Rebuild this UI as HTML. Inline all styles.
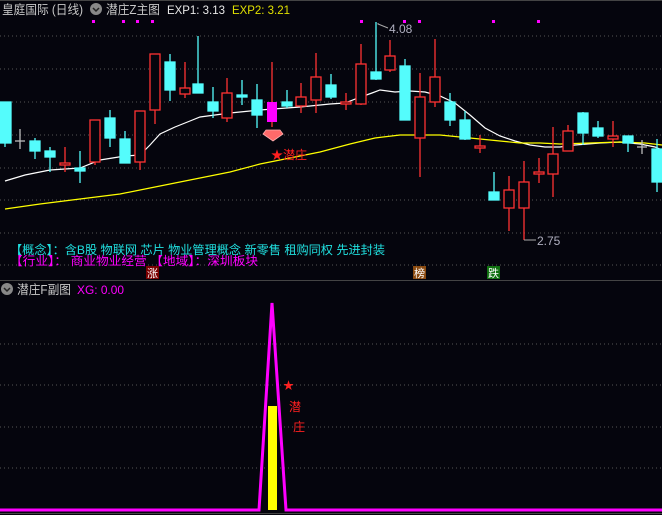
<!DOCTYPE html>
<html><head><meta charset="utf-8"><style>
body{margin:0;background:#05050d;width:662px;height:515px;overflow:hidden;font-family:"Liberation Sans","Noto Sans CJK SC",sans-serif}
svg{position:absolute;left:0;top:0}
</style></head><body>
<svg width="662" height="515" xmlns="http://www.w3.org/2000/svg" font-family="Liberation Sans, Noto Sans CJK SC, sans-serif">
<rect width="662" height="515" fill="#05050d"/>
<line x1="0" y1="0.5" x2="662" y2="0.5" stroke="#444"/>
<g stroke="#555" stroke-dasharray="1,3">
<line x1="0" y1="36" x2="662" y2="36"/><line x1="0" y1="69" x2="662" y2="69"/><line x1="0" y1="102" x2="662" y2="102"/><line x1="0" y1="135" x2="662" y2="135"/><line x1="0" y1="168" x2="662" y2="168"/><line x1="0" y1="200" x2="662" y2="200"/><line x1="0" y1="233" x2="662" y2="233"/><line x1="0" y1="265" x2="662" y2="265"/>
<line x1="0" y1="344" x2="662" y2="344"/><line x1="0" y1="385" x2="662" y2="385"/><line x1="0" y1="427" x2="662" y2="427"/><line x1="0" y1="468" x2="662" y2="468"/>
</g>
<line x1="0" y1="280.5" x2="662" y2="280.5" stroke="#444"/>
<line x1="0" y1="513.5" x2="662" y2="513.5" stroke="#444"/>
<text x="2" y="14" font-size="12.5" fill="#c8c8c8" textLength="81" lengthAdjust="spacingAndGlyphs">皇庭国际 (日线)</text>
<circle cx="96" cy="9" r="6" fill="#888"/><path d="M93 8l3 3 3-3" stroke="#222" fill="none" stroke-width="1.5"/>
<text x="106" y="14" font-size="12.5" fill="#c8c8c8" textLength="54" lengthAdjust="spacingAndGlyphs">潜庄Z主图</text>
<text x="167" y="14" font-size="12" fill="#e8e8e8" textLength="58" lengthAdjust="spacingAndGlyphs">EXP1: 3.13</text>
<text x="232" y="14" font-size="12" fill="#e0e000" textLength="58" lengthAdjust="spacingAndGlyphs">EXP2: 3.21</text>
<g fill="#ff00ff"><rect x="92" y="20" width="3" height="3"/><rect x="122" y="20" width="3" height="3"/><rect x="136" y="20" width="3" height="3"/><rect x="151" y="20" width="3" height="3"/><rect x="360" y="20" width="3" height="3"/><rect x="403" y="20" width="3" height="3"/><rect x="418" y="20" width="3" height="3"/><rect x="492" y="20" width="3" height="3"/><rect x="537" y="20" width="3" height="3"/></g>
<polyline fill="none" stroke="#fff" stroke-width="1.2" points="5,181 25,175 50,170 80,168 100,160 125,156 140,155 150,145 160,134 175,127 190,121 200,117 230,113 260,110 300,107 330,104 345,103 358,98 372,93 380,90 395,92 410,91 425,92 440,96 455,103 470,115 485,128 500,136 515,141 530,145 545,147 560,147 575,145 600,143 620,142 640,144 655,147 662,150"/>
<polyline fill="none" stroke="#ffff00" stroke-width="1.2" points="5,209 40,204 80,199 120,194 150,188 190,180 230,172 260,164 290,158 320,152 350,144 375,138 400,135 440,135 470,138 500,141 520,143 540,143 560,144 590,143 620,142 645,143 662,145"/>
<g stroke-width="1.3">
<g stroke="#54fcfc" fill="#54fcfc">
<line x1="5" y1="102" x2="5" y2="147"/><rect x="0" y="102" width="11" height="41"/>
<line x1="35" y1="138" x2="35" y2="159"/><rect x="30" y="141" width="10" height="10"/>
<line x1="50" y1="147" x2="50" y2="172"/><rect x="45" y="151" width="10" height="6"/>
<line x1="80" y1="151" x2="80" y2="183"/><rect x="75" y="168" width="10" height="3"/>
<line x1="110" y1="110" x2="110" y2="147"/><rect x="105" y="118" width="10" height="20"/>
<line x1="125" y1="131" x2="125" y2="163"/><rect x="120" y="139" width="10" height="24"/>
<line x1="170" y1="54" x2="170" y2="101"/><rect x="165" y="62" width="10" height="28"/>
<line x1="198" y1="36" x2="198" y2="93"/><rect x="193" y="84" width="10" height="9"/>
<line x1="213" y1="87" x2="213" y2="118"/><rect x="208" y="102" width="10" height="9"/>
<line x1="242" y1="80" x2="242" y2="105"/><rect x="237" y="95" width="10" height="2"/>
<line x1="257" y1="84" x2="257" y2="128"/><rect x="252" y="100" width="10" height="15"/>
<line x1="287" y1="90" x2="287" y2="108"/><rect x="282" y="102" width="10" height="4"/>
<line x1="331" y1="74" x2="331" y2="99"/><rect x="326" y="85" width="10" height="12"/>
<line x1="376" y1="22" x2="376" y2="80"/><rect x="371" y="72" width="10" height="7"/>
<line x1="405" y1="59" x2="405" y2="120"/><rect x="400" y="66" width="10" height="54"/>
<line x1="450" y1="93" x2="450" y2="126"/><rect x="445" y="102" width="10" height="18"/>
<line x1="465" y1="111" x2="465" y2="140"/><rect x="460" y="120" width="10" height="19"/>
<line x1="494" y1="172" x2="494" y2="200"/><rect x="489" y="192" width="10" height="8"/>
<line x1="583" y1="112" x2="583" y2="145"/><rect x="578" y="113" width="10" height="20"/>
<line x1="598" y1="121" x2="598" y2="138"/><rect x="593" y="128" width="10" height="8"/>
<line x1="628" y1="136" x2="628" y2="152"/><rect x="623" y="136" width="10" height="7"/>
<line x1="657" y1="139" x2="657" y2="192"/><rect x="652" y="149" width="10" height="33"/>
</g>
<g stroke="#ff3232" fill="#05050d">
<line x1="65" y1="147" x2="65" y2="172"/><rect x="60" y="163" width="10" height="2"/>
<line x1="95" y1="120" x2="95" y2="165"/><rect x="90" y="120" width="10" height="42"/>
<line x1="140" y1="111" x2="140" y2="170"/><rect x="135" y="111" width="10" height="51"/>
<line x1="155" y1="54" x2="155" y2="124"/><rect x="150" y="54" width="10" height="56"/>
<line x1="185" y1="62" x2="185" y2="98"/><rect x="180" y="88" width="10" height="6"/>
<line x1="227" y1="78" x2="227" y2="122"/><rect x="222" y="93" width="10" height="25"/>
<line x1="301" y1="83" x2="301" y2="113"/><rect x="296" y="97" width="10" height="9"/>
<line x1="316" y1="53" x2="316" y2="113"/><rect x="311" y="77" width="10" height="23"/>
<line x1="346" y1="93" x2="346" y2="110"/><rect x="341" y="102" width="10" height="2"/>
<line x1="361" y1="44" x2="361" y2="105"/><rect x="356" y="64" width="10" height="40"/>
<line x1="390" y1="40" x2="390" y2="72"/><rect x="385" y="56" width="10" height="14"/>
<line x1="420" y1="73" x2="420" y2="177"/><rect x="415" y="97" width="10" height="41"/>
<line x1="435" y1="39" x2="435" y2="107"/><rect x="430" y="77" width="10" height="25"/>
<line x1="480" y1="135" x2="480" y2="153"/><rect x="475" y="146" width="10" height="2"/>
<line x1="509" y1="176" x2="509" y2="231"/><rect x="504" y="190" width="10" height="18"/>
<line x1="524" y1="161" x2="524" y2="240"/><rect x="519" y="182" width="10" height="26"/>
<line x1="539" y1="158" x2="539" y2="183"/><rect x="534" y="172" width="10" height="2"/>
<line x1="553" y1="127" x2="553" y2="197"/><rect x="548" y="154" width="10" height="20"/>
<line x1="568" y1="125" x2="568" y2="151"/><rect x="563" y="131" width="10" height="20"/>
<line x1="613" y1="121" x2="613" y2="147"/><rect x="608" y="136" width="10" height="3"/>
</g>
<g stroke="#bbb"><line x1="20" y1="129" x2="20" y2="149"/><line x1="15" y1="141" x2="25" y2="141"/><line x1="642" y1="140" x2="642" y2="154"/><line x1="637" y1="147" x2="647" y2="147"/></g>
<line x1="272" y1="62" x2="272" y2="127" stroke="#ff3232"/><rect x="267" y="102" width="10" height="20" fill="#ff00ff"/>
</g>
<path d="M266 130h14l3 4-10 7-10-7z" fill="#ff6a6a" stroke="#ffb0b0" stroke-width="0.8"/>
<text x="271" y="159" font-size="12" fill="#ff2020">★潜庄</text>
<polyline points="378,23 378,24 388,28" fill="none" stroke="#aaa"/>
<text x="389" y="33" font-size="12" fill="#b0b0c0">4.08</text>
<line x1="524" y1="240" x2="536" y2="240" stroke="#aaa"/>
<text x="537" y="245" font-size="12" fill="#b0b0c0">2.75</text>
<text x="10" y="254" font-size="12" fill="#20e0e0" textLength="375" lengthAdjust="spacingAndGlyphs">【概念】：含B股 物联网 芯片 物业管理概念 新零售 租购同权 先进封装</text>
<text x="10" y="265" font-size="12" fill="#ff00ff" textLength="248" lengthAdjust="spacingAndGlyphs">【行业】：&#160;商业物业经营 【地域】：深圳板块</text>
<rect x="146" y="266" width="13" height="13" fill="#7a0000"/><text x="147" y="277" font-size="11" fill="#fff">涨</text>
<rect x="413" y="266" width="13" height="13" fill="#8a4a10"/><text x="414" y="277" font-size="11" fill="#fff">榜</text>
<rect x="487" y="266" width="13" height="13" fill="#107010"/><text x="488" y="277" font-size="11" fill="#fff">跌</text>
<circle cx="7" cy="289" r="6" fill="#888"/><path d="M4 288l3 3 3-3" stroke="#222" fill="none" stroke-width="1.5"/>
<text x="17" y="294" font-size="12.5" fill="#c8c8c8" textLength="54" lengthAdjust="spacingAndGlyphs">潜庄F副图</text>
<text x="77" y="294" font-size="12" fill="#ff00ff" textLength="47" lengthAdjust="spacingAndGlyphs">XG: 0.00</text>
<rect x="268" y="406" width="9" height="104" fill="#ffff00"/>
<polyline fill="none" stroke="#ff00ff" stroke-width="3" points="0,510 259,510 272,303 286,510 662,510"/>
<text x="283" y="389" font-size="11" fill="#ff2020">★</text>
<text x="289" y="411" font-size="12" fill="#ff2020">潜</text>
<text x="293" y="431" font-size="12" fill="#ff2020">庄</text>
</svg>
</body></html>
